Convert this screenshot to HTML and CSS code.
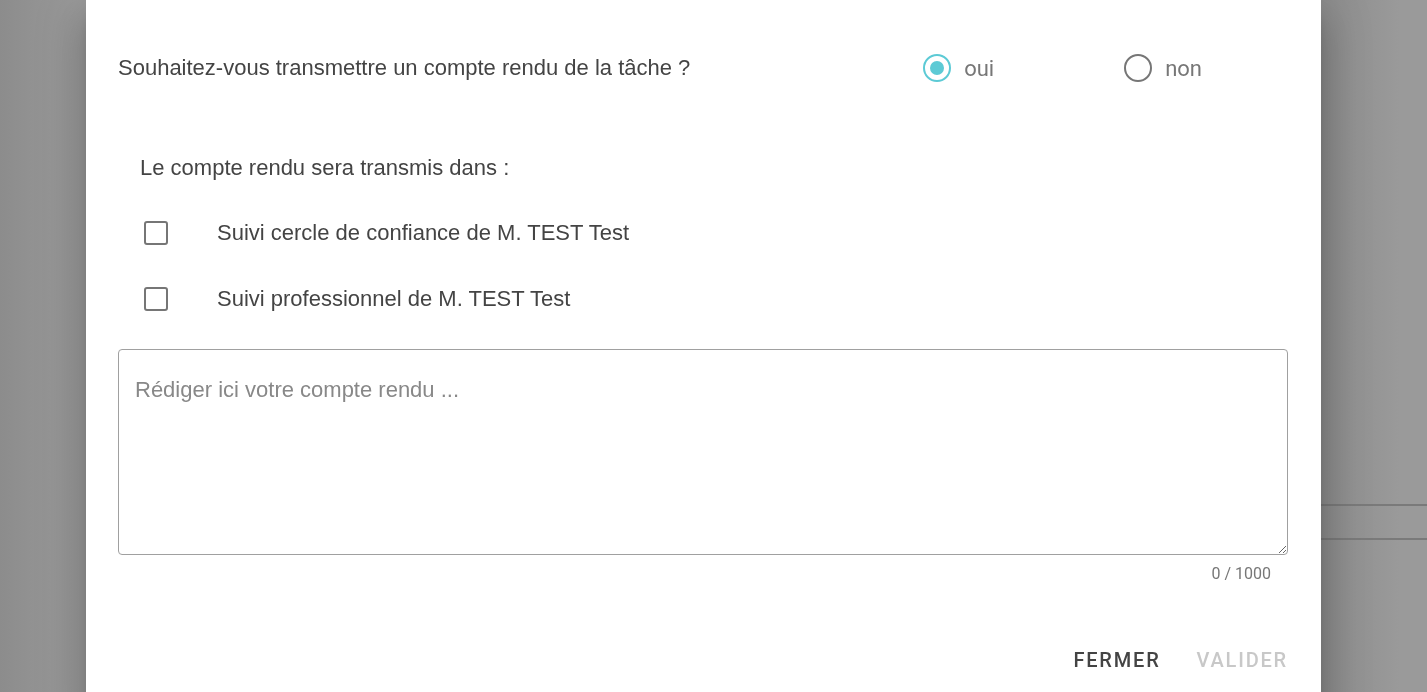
FILE: index.html
```html
<!DOCTYPE html>
<html lang="fr">
<head>
  <meta charset="UTF-8" />
  <meta name="viewport" content="width=device-width, initial-scale=1.0"/>
  <title>Compte rendu de la tâche</title>
  <link rel="stylesheet" href="styles.css">
</head>
<body>
  <div class="backdrop">
    <div class="page-lines">
      <div class="page-line"></div>
      <div class="page-line"></div>
    </div>
  </div>

  <div class="dialog">
    <div class="question-row">
      <p class="question">Souhaitez-vous transmettre un compte rendu de la tâche ?</p>
      <div class="radio-group">
        <label class="radio-option">
          <span class="radio checked"><span class="radio-dot"></span></span>
          <span class="radio-label">oui</span>
        </label>
        <label class="radio-option">
          <span class="radio"></span>
          <span class="radio-label">non</span>
        </label>
      </div>
    </div>

    <p class="subtitle">Le compte rendu sera transmis dans :</p>

    <div class="check-list">
      <label class="check-row">
        <span class="checkbox"></span>
        <span class="check-label">Suivi cercle de confiance de M. TEST Test</span>
      </label>
      <label class="check-row">
        <span class="checkbox"></span>
        <span class="check-label">Suivi professionnel de M. TEST Test</span>
      </label>
    </div>

    <div class="report">
      <textarea class="report-text" placeholder="Rédiger ici votre compte rendu ..."></textarea>
      <div class="counter">0 / 1000</div>
    </div>

    <div class="actions">
      <button class="btn">FERMER</button>
      <button class="btn disabled">VALIDER</button>
    </div>
  </div>
</body>
</html>
```

FILE: styles.css
```css
body {
  margin: 0;
  height: 692px;
  overflow: hidden;
  background: #9a9a9a;
  font-family: "Liberation Sans", Arial, sans-serif;
}

.backdrop {
  position: fixed;
  inset: 0;
  background: linear-gradient(to right, #8c8c8c 0, #9a9a9a 80px, #9a9a9a 1240px, #8c8c8c 1321px, #9a9a9a 1400px);
}

.page-lines {
  margin-left: 1321px;
  padding-top: 504px;
}

.page-line {
  height: 2px;
  background: #7a7a7a;
  margin-bottom: 32px;
}

.dialog {
  position: relative;
  margin-left: 86px;
  width: 1235px;
  height: 720px;
  box-sizing: border-box;
  background: #fff;
  padding: 42px 33px 0 32px;
  box-shadow: 0 11px 15px -7px rgba(0,0,0,0.2), 0 24px 38px 3px rgba(0,0,0,0.14), 0 9px 46px 8px rgba(0,0,0,0.12);
}

p {
  margin: 0;
}

.question-row {
  display: flex;
  align-items: center;
  height: 52px;
}

.question {
  flex: 1;
  font-size: 22px;
  color: #444;
}

.radio-group {
  display: flex;
  margin-right: 86px;
}

.radio-option {
  display: flex;
  align-items: center;
  gap: 13px;
  width: 201px;
}

.radio-option:last-child {
  width: auto;
}

.radio {
  width: 28px;
  height: 28px;
  box-sizing: border-box;
  border: 2.5px solid #767676;
  border-radius: 50%;
  display: flex;
  align-items: center;
  justify-content: center;
}

.radio.checked {
  border-color: #5ccad5;
}

.radio-dot {
  width: 14px;
  height: 14px;
  border-radius: 50%;
  background: #5ccad5;
}

.radio-label {
  font-family: Roboto, sans-serif;
  font-size: 22px;
  color: #777;
}

.subtitle {
  margin: 59px 0 0 22px;
  font-size: 22px;
  color: #444;
  line-height: 30px;
}

.check-list {
  margin-top: 38px;
  display: flex;
  flex-direction: column;
  gap: 42px;
}

.check-row {
  display: flex;
  align-items: center;
  height: 24px;
  padding-left: 26px;
}

.checkbox {
  width: 24px;
  height: 24px;
  box-sizing: border-box;
  border: 2.5px solid #767676;
  border-radius: 3px;
}

.check-label {
  margin-left: 49px;
  font-size: 22px;
  color: #444;
}

.report {
  margin-top: 38px;
}

.report-text {
  display: block;
  width: 100%;
  height: 206px;
  box-sizing: border-box;
  border: 1.5px solid #a0a0a0;
  border-radius: 4px;
  padding: 27px 16px;
  font-family: "Liberation Sans", Arial, sans-serif;
  font-size: 22px;
  color: #333;
  resize: vertical;
}

.report-text::placeholder {
  color: #888;
}

.counter {
  text-align: right;
  padding-right: 17px;
  margin-top: 9px;
  font-family: Roboto, sans-serif;
  font-size: 16px;
  color: #777;
}

.actions {
  display: flex;
  justify-content: flex-end;
  gap: 36px;
  margin-top: 65px;
}

.btn {
  background: none;
  border: none;
  padding: 0;
  font-family: Roboto, sans-serif;
  font-size: 20px;
  font-weight: 500;
  letter-spacing: 1.8px;
  color: #444;
  cursor: pointer;
}

.btn.disabled {
  color: #c8c8c8;
  cursor: default;
}
```
